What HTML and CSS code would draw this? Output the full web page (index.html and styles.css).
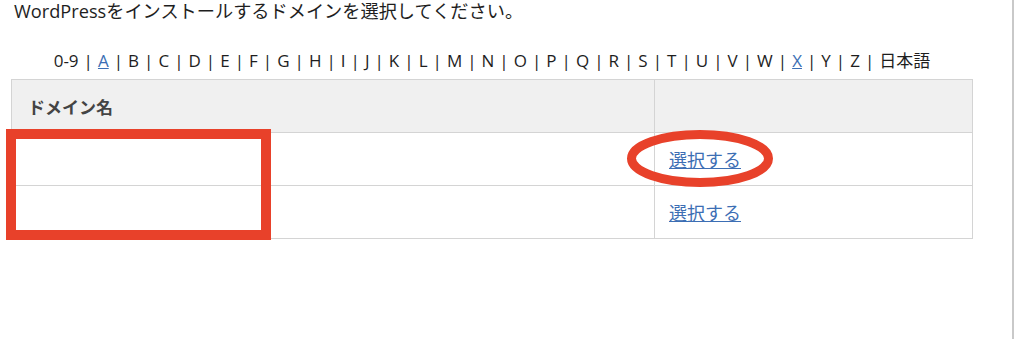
FILE: index.html
```html
<!DOCTYPE html>
<html lang="ja">
<head>
    <meta charset="UTF-8">
    <meta name="viewport" content="width=device-width, initial-scale=1.0">
    <title>ドメイン選択</title>
    <link rel="stylesheet" href="styles.css">
</head>
<body>
    <div class="page">
        <p class="intro">WordPressをインストールするドメインを選択してください。</p>

        <p class="index">
            0-9 | <a href="#">A</a> | B | C | D | E | F | G | H | I | J | K | L | M | N | O | P | Q | R | S | T | U | V | W | <a href="#">X</a> | Y | Z | 日本語
        </p>

        <div class="table-wrap">
            <table class="domains">
                <tr>
                    <th class="col-name">ドメイン名</th>
                    <th></th>
                </tr>
                <tr>
                    <td class="col-name"></td>
                    <td><a href="#">選択する</a></td>
                </tr>
                <tr>
                    <td class="col-name"></td>
                    <td><a href="#">選択する</a></td>
                </tr>
            </table>

            <!-- 注記: 赤い枠と丸 -->
            <div class="mark-box"></div>
            <svg class="mark-circle" width="148" height="59" viewBox="0 0 148 59">
                <ellipse cx="74" cy="29.5" rx="68.5" ry="24" fill="none" stroke="#e8412a" stroke-width="9"/>
            </svg>
        </div>
    </div>
</body>
</html>
```

FILE: styles.css
```css
body {
    margin: 0;
    background: #fff;
    font-family: "Open Sans", "Noto Sans CJK JP", sans-serif;
    color: #1e1e1e;
}
.page {
    width: 1014px;
    min-height: 339px;
    border-right: 2px solid #c9c9c9;
    box-sizing: border-box;
}
.intro {
    margin: 0;
    padding-left: 14px;
    font-size: 18.2px;
    line-height: 22px;
}
.index {
    width: 962px;
    margin: 27px 0 0 11px;
    text-align: center;
    font-size: 17px;
    line-height: 24px;
    word-spacing: 0.6px;
}
.index a {
    color: #3c6eb4;
}
.table-wrap {
    position: relative;
    margin: 6px 0 0 11px;
    width: 962px;
}
.domains {
    width: 962px;
    border-collapse: collapse;
    border: 1px solid #d4d4d4;
}
.domains th,
.domains td {
    height: 52px;
    border: 1px solid #d4d4d4;
    padding: 0 14px;
    text-align: left;
    font-size: 18px;
}
.domains th {
    background: #f0f0f0;
    color: #444;
    font-size: 17px;
    font-weight: bold;
}
.domains th.col-name {
    padding-left: 16px;
}
.col-name {
    width: 612px;
}
.domains a {
    color: #3c6eb4;
}
.mark-box {
    position: absolute;
    left: -5px;
    top: 50px;
    width: 265px;
    height: 111px;
    border: 10px solid #e8412a;
    box-sizing: border-box;
}
.mark-circle {
    position: absolute;
    left: 615px;
    top: 50px;
}
```
